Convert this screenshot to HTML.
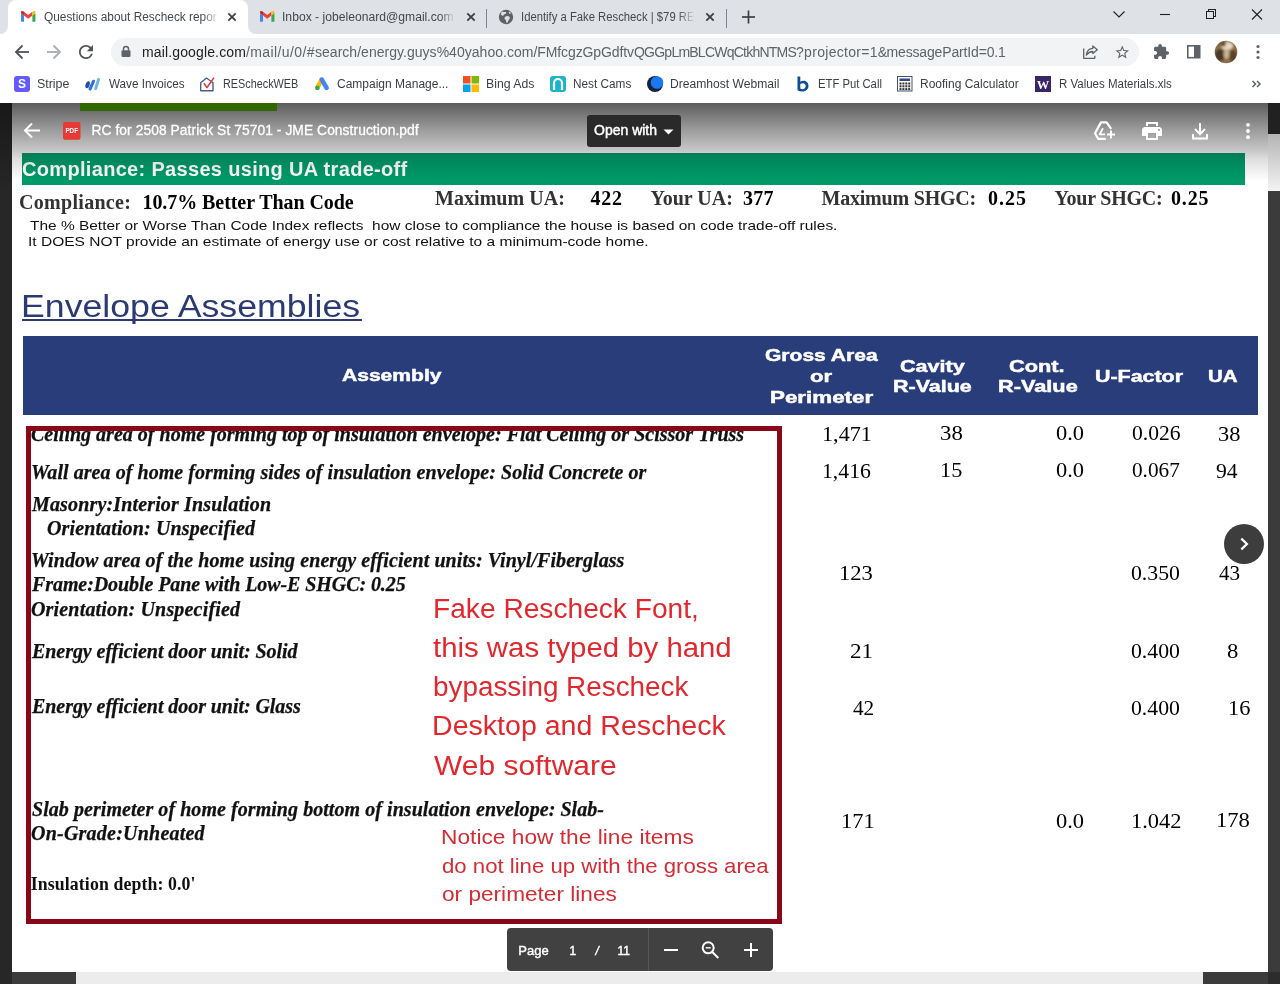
<!DOCTYPE html>
<html>
<head>
<meta charset="utf-8">
<title>Questions about Rescheck report</title>
<style>
*{box-sizing:border-box;margin:0;padding:0}
html,body{width:1280px;height:984px;overflow:hidden;background:#fff;font-family:"Liberation Sans",sans-serif;}
#root{will-change:transform;position:relative;width:1280px;height:984px;overflow:hidden;background:#fff}
.a{position:absolute}
.t{position:absolute;white-space:pre;line-height:1;transform-origin:0 0}
svg{position:absolute;overflow:visible}
</style>
</head>
<body>
<div id="root">

<!-- ===== PAGE SHAPES ===== -->
<div class="a" style="left:22px;top:153px;width:1223px;height:31.5px;background:#009a68"></div>
<div class="a" style="left:22px;top:319px;width:340px;height:2px;background:#2b3a73"></div>
<div class="a" style="left:22.5px;top:335.7px;width:1235px;height:79.8px;background:#293d7a"></div>

<div class="t" style="font-family:'Liberation Sans',sans-serif;font-size:12px;font-weight:400;top:11.02px;color:#45494d;transform:scaleX(0.9886);z-index:9;left:44.00px;">Questions about Rescheck repor</div>
<div class="t" style="font-family:'Liberation Sans',sans-serif;font-size:12px;font-weight:400;top:11.02px;color:#45494d;transform:scaleX(1.0119);z-index:9;left:281.99px;">Inbox - jobeleonard@gmail.com</div>
<div class="t" style="font-family:'Liberation Sans',sans-serif;font-size:12px;font-weight:400;top:11.02px;color:#45494d;transform:scaleX(0.9399);z-index:9;left:521.06px;">Identify a Fake Rescheck | $79 RE</div>
<div class="t" style="font-family:'Liberation Sans',sans-serif;font-size:14px;font-weight:400;letter-spacing:0.138px;top:45.02px;color:#202124;z-index:9;left:142.00px;">mail.google.com</div>
<div class="t" style="font-family:'Liberation Sans',sans-serif;font-size:14px;font-weight:400;letter-spacing:0.401px;top:45.02px;color:#5f6368;z-index:9;left:246.00px;">/mail/u/0/#</div>
<div class="t" style="font-family:'Liberation Sans',sans-serif;font-size:14px;font-weight:400;letter-spacing:0.028px;top:45.02px;color:#5f6368;z-index:9;left:315.00px;">search/energy.guys%40yahoo.com</div>
<div class="t" style="font-family:'Liberation Sans',sans-serif;font-size:14px;font-weight:400;letter-spacing:-0.102px;top:45.02px;color:#5f6368;z-index:9;left:533.50px;">/FMfcgzGpGdftv</div>
<div class="t" style="font-family:'Liberation Sans',sans-serif;font-size:14px;font-weight:400;letter-spacing:-0.768px;top:45.02px;color:#5f6368;z-index:9;left:634.00px;">QGGpLmBLCWqCtkhNTMS</div>
<div class="t" style="font-family:'Liberation Sans',sans-serif;font-size:14px;font-weight:400;letter-spacing:0.303px;top:45.02px;color:#5f6368;z-index:9;left:796.00px;">?projector=1&amp;</div>
<div class="t" style="font-family:'Liberation Sans',sans-serif;font-size:14px;font-weight:400;letter-spacing:-0.156px;top:45.02px;color:#5f6368;z-index:9;left:886.50px;">messagePartId=0.1</div>
<div class="t" style="font-family:'Liberation Sans',sans-serif;font-size:12px;font-weight:400;top:78.02px;color:#3c4043;transform:scaleX(1.0333);z-index:9;left:36.97px;">Stripe</div>
<div class="t" style="font-family:'Liberation Sans',sans-serif;font-size:12px;font-weight:400;top:78.02px;color:#3c4043;transform:scaleX(0.9740);z-index:9;left:109.00px;">Wave Invoices</div>
<div class="t" style="font-family:'Liberation Sans',sans-serif;font-size:12px;font-weight:400;top:78.02px;color:#3c4043;transform:scaleX(0.9024);z-index:9;left:223.10px;">REScheckWEB</div>
<div class="t" style="font-family:'Liberation Sans',sans-serif;font-size:12px;font-weight:400;top:78.02px;color:#3c4043;transform:scaleX(1.0000);z-index:9;left:337.00px;">Campaign Manage...</div>
<div class="t" style="font-family:'Liberation Sans',sans-serif;font-size:12px;font-weight:400;top:78.02px;color:#3c4043;transform:scaleX(1.0217);z-index:9;left:485.98px;">Bing Ads</div>
<div class="t" style="font-family:'Liberation Sans',sans-serif;font-size:12px;font-weight:400;top:78.02px;color:#3c4043;transform:scaleX(0.9828);z-index:9;left:573.02px;">Nest Cams</div>
<div class="t" style="font-family:'Liberation Sans',sans-serif;font-size:12px;font-weight:400;top:78.02px;color:#3c4043;transform:scaleX(1.0093);z-index:9;left:669.99px;">Dreamhost Webmail</div>
<div class="t" style="font-family:'Liberation Sans',sans-serif;font-size:12px;font-weight:400;top:78.02px;color:#3c4043;transform:scaleX(0.9394);z-index:9;left:818.06px;">ETF Put Call</div>
<div class="t" style="font-family:'Liberation Sans',sans-serif;font-size:12px;font-weight:400;top:78.02px;color:#3c4043;transform:scaleX(1.0000);z-index:9;left:920.00px;">Roofing Calculator</div>
<div class="t" style="font-family:'Liberation Sans',sans-serif;font-size:12px;font-weight:400;top:78.02px;color:#3c4043;transform:scaleX(0.9569);z-index:9;left:1059.04px;">R Values Materials.xls</div>
<div class="t" style="font-family:'Liberation Sans',sans-serif;font-size:13.8px;font-weight:400;letter-spacing:0.070px;top:124.02px;color:#fff;z-index:6;-webkit-text-stroke:0.3px #fff;left:91.50px;">RC for 2508 Patrick St 75701 - JME Construction.pdf</div>
<div class="t" style="font-family:'Liberation Sans',sans-serif;font-size:14px;font-weight:400;top:123.02px;color:#fff;z-index:7;-webkit-text-stroke:0.45px #fff;left:594.00px;">Open with</div>
<div class="t" style="font-family:'Liberation Sans',sans-serif;font-size:20px;font-weight:700;letter-spacing:0.319px;top:159.02px;color:#fff;left:22.00px;">Compliance: Passes using UA trade-off</div>
<div class="t" style="font-family:'Liberation Serif',serif;font-size:20px;font-weight:700;letter-spacing:0.300px;top:192.02px;color:#333;left:19.00px;">Compliance:</div>
<div class="t" style="font-family:'Liberation Serif',serif;font-size:20px;font-weight:700;letter-spacing:-0.071px;top:192.02px;color:#000;left:142.50px;">10.7% Better Than Code</div>
<div class="t" style="font-family:'Liberation Serif',serif;font-size:20px;font-weight:700;letter-spacing:0.050px;top:188.02px;color:#333;left:435.00px;">Maximum UA:</div>
<div class="t" style="font-family:'Liberation Serif',serif;font-size:20px;font-weight:700;letter-spacing:0.750px;top:188.02px;color:#000;left:590.50px;">422</div>
<div class="t" style="font-family:'Liberation Serif',serif;font-size:20px;font-weight:700;top:188.02px;color:#333;left:650.50px;">Your UA:</div>
<div class="t" style="font-family:'Liberation Serif',serif;font-size:20px;font-weight:700;letter-spacing:0.250px;top:188.02px;color:#000;left:743.00px;">377</div>
<div class="t" style="font-family:'Liberation Serif',serif;font-size:20px;font-weight:700;letter-spacing:-0.208px;top:188.02px;color:#333;left:821.50px;">Maximum SHGC:</div>
<div class="t" style="font-family:'Liberation Serif',serif;font-size:20px;font-weight:700;letter-spacing:1.000px;top:188.02px;color:#000;left:988.00px;">0.25</div>
<div class="t" style="font-family:'Liberation Serif',serif;font-size:20px;font-weight:700;letter-spacing:-0.222px;top:188.02px;color:#333;left:1054.50px;">Your SHGC:</div>
<div class="t" style="font-family:'Liberation Serif',serif;font-size:20px;font-weight:700;letter-spacing:0.833px;top:188.02px;color:#000;left:1171.00px;">0.25</div>
<div class="t" style="font-family:'Liberation Sans',sans-serif;font-size:13.3px;font-weight:400;top:219.02px;color:#111;transform:scaleX(1.1621);left:29.50px;">The % Better or Worse Than Code Index reflects  how close to compliance the house is based on code trade-off rules.</div>
<div class="t" style="font-family:'Liberation Sans',sans-serif;font-size:13.3px;font-weight:400;top:235.02px;color:#111;transform:scaleX(1.1670);left:28.33px;">It DOES NOT provide an estimate of energy use or cost relative to a minimum-code home.</div>
<div class="t" style="font-family:'Liberation Sans',sans-serif;font-size:31px;font-weight:400;top:291.02px;color:#2b3a73;transform:scaleX(1.1507);left:21.20px;">Envelope Assemblies</div>
<div class="t" style="font-family:'Liberation Sans',sans-serif;font-size:17px;font-weight:700;top:367.02px;color:#fff;transform:scaleX(1.2380);-webkit-text-stroke:0.5px #fff;left:342.46px;">Assembly</div>
<div class="t" style="font-family:'Liberation Sans',sans-serif;font-size:17px;font-weight:700;top:347.02px;color:#fff;transform:scaleX(1.2367);-webkit-text-stroke:0.5px #fff;left:764.76px;">Gross Area</div>
<div class="t" style="font-family:'Liberation Sans',sans-serif;font-size:17px;font-weight:700;top:368.02px;color:#fff;transform:scaleX(1.3000);-webkit-text-stroke:0.5px #fff;left:810.20px;">or</div>
<div class="t" style="font-family:'Liberation Sans',sans-serif;font-size:17px;font-weight:700;top:389.02px;color:#fff;transform:scaleX(1.3156);-webkit-text-stroke:0.5px #fff;left:770.08px;">Perimeter</div>
<div class="t" style="font-family:'Liberation Sans',sans-serif;font-size:17px;font-weight:700;top:358.02px;color:#fff;transform:scaleX(1.2660);-webkit-text-stroke:0.5px #fff;left:899.63px;">Cavity</div>
<div class="t" style="font-family:'Liberation Sans',sans-serif;font-size:17px;font-weight:700;top:378.02px;color:#fff;transform:scaleX(1.2623);-webkit-text-stroke:0.5px #fff;left:893.34px;">R-Value</div>
<div class="t" style="font-family:'Liberation Sans',sans-serif;font-size:17px;font-weight:700;top:358.02px;color:#fff;transform:scaleX(1.2810);-webkit-text-stroke:0.5px #fff;left:1009.12px;">Cont.</div>
<div class="t" style="font-family:'Liberation Sans',sans-serif;font-size:17px;font-weight:700;top:378.02px;color:#fff;transform:scaleX(1.2787);-webkit-text-stroke:0.5px #fff;left:998.22px;">R-Value</div>
<div class="t" style="font-family:'Liberation Sans',sans-serif;font-size:17px;font-weight:700;top:368.02px;color:#fff;transform:scaleX(1.2594);-webkit-text-stroke:0.5px #fff;left:1094.84px;">U-Factor</div>
<div class="t" style="font-family:'Liberation Sans',sans-serif;font-size:17px;font-weight:700;top:368.02px;color:#fff;transform:scaleX(1.2043);-webkit-text-stroke:0.5px #fff;left:1208.00px;">UA</div>
<div class="t" style="font-family:'Liberation Serif',serif;font-size:21px;font-weight:400;top:424.02px;color:#000;transform:scaleX(1.0568);left:822.29px;">1,471</div>
<div class="t" style="font-family:'Liberation Serif',serif;font-size:21px;font-weight:400;top:423.02px;color:#000;transform:scaleX(1.0842);left:939.52px;">38</div>
<div class="t" style="font-family:'Liberation Serif',serif;font-size:21px;font-weight:400;top:423.02px;color:#000;transform:scaleX(1.0680);left:1055.93px;">0.0</div>
<div class="t" style="font-family:'Liberation Serif',serif;font-size:21px;font-weight:400;top:423.02px;color:#000;transform:scaleX(1.0261);left:1131.67px;">0.026</div>
<div class="t" style="font-family:'Liberation Serif',serif;font-size:21px;font-weight:400;top:424.02px;color:#000;transform:scaleX(1.0684);left:1217.53px;">38</div>
<div class="t" style="font-family:'Liberation Serif',serif;font-size:21px;font-weight:400;top:461.02px;color:#000;transform:scaleX(1.0356);left:821.93px;">1,416</div>
<div class="t" style="font-family:'Liberation Serif',serif;font-size:21px;font-weight:400;top:460.02px;color:#000;transform:scaleX(1.0611);left:939.78px;">15</div>
<div class="t" style="font-family:'Liberation Serif',serif;font-size:21px;font-weight:400;top:460.02px;color:#000;transform:scaleX(1.0680);left:1055.93px;">0.0</div>
<div class="t" style="font-family:'Liberation Serif',serif;font-size:21px;font-weight:400;top:460.02px;color:#000;transform:scaleX(1.0109);left:1131.69px;">0.067</div>
<div class="t" style="font-family:'Liberation Serif',serif;font-size:21px;font-weight:400;top:461.02px;color:#000;transform:scaleX(1.0300);left:1215.87px;">94</div>
<div class="t" style="font-family:'Liberation Serif',serif;font-size:21px;font-weight:400;top:563.02px;color:#000;transform:scaleX(1.0759);left:839.35px;">123</div>
<div class="t" style="font-family:'Liberation Serif',serif;font-size:21px;font-weight:400;top:563.02px;color:#000;transform:scaleX(1.0348);left:1131.37px;">0.350</div>
<div class="t" style="font-family:'Liberation Serif',serif;font-size:21px;font-weight:400;top:563.02px;color:#000;transform:scaleX(1.0050);left:1218.70px;">43</div>
<div class="t" style="font-family:'Liberation Serif',serif;font-size:21px;font-weight:400;top:641.02px;color:#000;transform:scaleX(1.1000);left:849.60px;">21</div>
<div class="t" style="font-family:'Liberation Serif',serif;font-size:21px;font-weight:400;top:641.02px;color:#000;transform:scaleX(1.0348);left:1131.37px;">0.400</div>
<div class="t" style="font-family:'Liberation Serif',serif;font-size:21px;font-weight:400;top:641.02px;color:#000;transform:scaleX(1.0778);left:1226.92px;">8</div>
<div class="t" style="font-family:'Liberation Serif',serif;font-size:21px;font-weight:400;top:698.02px;color:#000;transform:scaleX(1.0100);left:853.20px;">42</div>
<div class="t" style="font-family:'Liberation Serif',serif;font-size:21px;font-weight:400;top:698.02px;color:#000;transform:scaleX(1.0348);left:1131.37px;">0.400</div>
<div class="t" style="font-family:'Liberation Serif',serif;font-size:21px;font-weight:400;top:698.02px;color:#000;transform:scaleX(1.0632);left:1227.57px;">16</div>
<div class="t" style="font-family:'Liberation Serif',serif;font-size:21px;font-weight:400;top:811.02px;color:#000;transform:scaleX(1.0714);left:840.86px;">171</div>
<div class="t" style="font-family:'Liberation Serif',serif;font-size:21px;font-weight:400;top:811.02px;color:#000;transform:scaleX(1.0680);left:1055.93px;">0.0</div>
<div class="t" style="font-family:'Liberation Serif',serif;font-size:21px;font-weight:400;top:811.02px;color:#000;transform:scaleX(1.0682);left:1130.86px;">1.042</div>
<div class="t" style="font-family:'Liberation Serif',serif;font-size:21px;font-weight:400;top:810.02px;color:#000;transform:scaleX(1.0759);left:1216.25px;">178</div>
<div class="t" style="font-family:'Liberation Serif',serif;font-size:20px;font-weight:700;font-style:italic;letter-spacing:0.012px;top:424.02px;color:#111;-webkit-text-stroke:0.25px #111;left:31.00px;">Ceiling area of home forming top of insulation envelope: Flat Ceiling or Scissor Truss</div>
<div class="t" style="font-family:'Liberation Serif',serif;font-size:20px;font-weight:700;font-style:italic;letter-spacing:0.056px;top:462.02px;color:#111;-webkit-text-stroke:0.25px #111;left:31.00px;">Wall area of home forming sides of insulation envelope: Solid Concrete or</div>
<div class="t" style="font-family:'Liberation Serif',serif;font-size:20px;font-weight:700;font-style:italic;letter-spacing:0.154px;top:494.02px;color:#111;-webkit-text-stroke:0.25px #111;left:32.00px;">Masonry:Interior Insulation</div>
<div class="t" style="font-family:'Liberation Serif',serif;font-size:20px;font-weight:700;font-style:italic;letter-spacing:0.130px;top:518.02px;color:#111;-webkit-text-stroke:0.25px #111;left:47.00px;">Orientation: Unspecified</div>
<div class="t" style="font-family:'Liberation Serif',serif;font-size:20px;font-weight:700;font-style:italic;letter-spacing:0.072px;top:550.02px;color:#111;-webkit-text-stroke:0.25px #111;left:31.00px;">Window area of the home using energy efficient units: Vinyl/Fiberglass</div>
<div class="t" style="font-family:'Liberation Serif',serif;font-size:20px;font-weight:700;font-style:italic;letter-spacing:-0.079px;top:574.02px;color:#111;-webkit-text-stroke:0.25px #111;left:32.00px;">Frame:Double Pane with Low-E SHGC: 0.25</div>
<div class="t" style="font-family:'Liberation Serif',serif;font-size:20px;font-weight:700;font-style:italic;letter-spacing:0.174px;top:599.02px;color:#111;-webkit-text-stroke:0.25px #111;left:31.00px;">Orientation: Unspecified</div>
<div class="t" style="font-family:'Liberation Serif',serif;font-size:20px;font-weight:700;font-style:italic;letter-spacing:-0.062px;top:641.02px;color:#111;-webkit-text-stroke:0.25px #111;left:32.00px;">Energy efficient door unit: Solid</div>
<div class="t" style="font-family:'Liberation Serif',serif;font-size:20px;font-weight:700;font-style:italic;letter-spacing:-0.062px;top:696.02px;color:#111;-webkit-text-stroke:0.25px #111;left:32.00px;">Energy efficient door unit: Glass</div>
<div class="t" style="font-family:'Liberation Serif',serif;font-size:20px;font-weight:700;font-style:italic;letter-spacing:0.055px;top:799.02px;color:#111;-webkit-text-stroke:0.25px #111;left:32.00px;">Slab perimeter of home forming bottom of insulation envelope: Slab-</div>
<div class="t" style="font-family:'Liberation Serif',serif;font-size:20px;font-weight:700;font-style:italic;letter-spacing:0.225px;top:823.02px;color:#111;-webkit-text-stroke:0.25px #111;left:31.00px;">On-Grade:Unheated</div>
<div class="t" style="font-family:'Liberation Serif',serif;font-size:17.8px;font-weight:700;letter-spacing:0.110px;top:876.02px;color:#111;left:30.70px;">Insulation depth: 0.0&#x27;</div>
<div class="t" style="font-family:'Liberation Sans',sans-serif;font-size:27px;font-weight:400;top:596.02px;color:#e0282e;transform:scaleX(1.0422);left:432.52px;">Fake Rescheck Font,</div>
<div class="t" style="font-family:'Liberation Sans',sans-serif;font-size:27px;font-weight:400;top:635.02px;color:#e0282e;transform:scaleX(1.0875);left:433.30px;">this was typed by hand</div>
<div class="t" style="font-family:'Liberation Sans',sans-serif;font-size:27px;font-weight:400;top:674.02px;color:#e0282e;transform:scaleX(1.0313);left:432.54px;">bypassing Rescheck</div>
<div class="t" style="font-family:'Liberation Sans',sans-serif;font-size:27px;font-weight:400;top:713.02px;color:#e0282e;transform:scaleX(1.0580);left:431.88px;">Desktop and Rescheck</div>
<div class="t" style="font-family:'Liberation Sans',sans-serif;font-size:27px;font-weight:400;top:753.02px;color:#e0282e;transform:scaleX(1.1098);left:434.00px;">Web software</div>
<div class="t" style="font-family:'Liberation Sans',sans-serif;font-size:21px;font-weight:400;top:826.02px;color:#d42c34;transform:scaleX(1.0827);left:440.93px;">Notice how the line items</div>
<div class="t" style="font-family:'Liberation Sans',sans-serif;font-size:21px;font-weight:400;top:855.02px;color:#d42c34;transform:scaleX(1.0553);left:442.04px;">do not line up with the gross area</div>
<div class="t" style="font-family:'Liberation Sans',sans-serif;font-size:21px;font-weight:400;top:883.02px;color:#d42c34;transform:scaleX(1.0776);left:442.02px;">or perimeter lines</div>
<div class="t" style="font-family:'Liberation Sans',sans-serif;font-size:13px;font-weight:400;top:944.02px;color:#fff;-webkit-text-stroke:0.4px #fff;z-index:2;left:518.30px;">Page</div>
<div class="t" style="font-family:'Liberation Sans',sans-serif;font-size:12px;font-weight:400;top:945.02px;color:#fff;-webkit-text-stroke:0.4px #fff;z-index:2;left:569.50px;">1</div>
<div class="t" style="font-family:'Liberation Sans',sans-serif;font-size:12px;font-weight:400;font-style:italic;top:945.02px;color:#fff;-webkit-text-stroke:0.4px #fff;z-index:2;left:595.50px;">/</div>
<div class="t" style="font-family:'Liberation Sans',sans-serif;font-size:12px;font-weight:400;top:945.02px;color:#fff;-webkit-text-stroke:0.4px #fff;z-index:2;left:617.50px;">11</div>

<!-- red box -->
<div class="a" style="left:26px;top:426px;width:756px;height:498px;border:5px solid #8a0718"></div>

<!-- circle next button -->
<div class="a" style="left:1224px;top:524px;width:40px;height:40px;border-radius:50%;background:#3d3d3d"></div>
<svg style="left:1224px;top:524px" width="40" height="40"><polyline points="17.300,14.600 22.900,20 17.300,25.400" fill="none" stroke="#fff" stroke-width="2.300"/></svg>

<!-- page control -->
<div class="a" style="left:507px;top:928px;width:266px;height:43px;border-radius:4px;background:#414141;z-index:1"></div>
<div class="a" style="left:648px;top:928px;width:1px;height:43px;background:#565656;z-index:1"></div>
<svg style="left:0;top:0;z-index:2" width="1280" height="984">
 <g stroke="#fff" stroke-width="2" fill="none">
  <line x1="664" y1="950" x2="678" y2="950"/>
  <circle cx="708.2" cy="947.8" r="5.5"/><line x1="712.3" y1="952" x2="718.3" y2="958"/><line x1="705.7" y1="947.8" x2="710.7" y2="947.8" stroke-width="1.4"/>
  <line x1="744" y1="950" x2="758" y2="950"/><line x1="751" y1="943" x2="751" y2="957"/>
 </g>
</svg>

<!-- ===== VIEWER HEADER GRADIENT ===== -->
<div class="a" style="left:12px;top:103px;width:1256px;height:78px;z-index:5;background:linear-gradient(to bottom,rgba(0,0,0,0.64) 0%,rgba(0,0,0,0.42) 30%,rgba(0,0,0,0.21) 62%,rgba(0,0,0,0.13) 72%,rgba(0,0,0,0) 100%)"></div>
<div class="a" style="left:80px;top:103px;width:197px;height:8.3px;background:#2f6800;z-index:6"></div>
<!-- open with -->
<div class="a" style="left:587px;top:115px;width:94px;height:32px;border-radius:3px;background:#2a2a2a;z-index:6"></div>
<svg style="left:0;top:0;z-index:6" width="1280" height="200">
 <polygon points="663.5,129.5 673.5,129.5 668.5,134.5" fill="#fff"/>
 <!-- back arrow -->
 <g stroke="#fff" stroke-width="2" fill="none"><line x1="25.5" y1="130.5" x2="40" y2="130.5"/><polyline points="32,123.5 25,130.5 32,137.5"/></g>
 <!-- pdf icon -->
 <rect x="63" y="122" width="17.5" height="17.7" rx="2" fill="#e53a35"/>
 <text x="71.7" y="133.4" font-family="Liberation Sans" font-weight="700" font-size="6.3" fill="#fff" text-anchor="middle">PDF</text>
 <!-- drive add -->
 <g stroke="#fff" stroke-width="2" fill="none" stroke-linejoin="round">
  <path d="M1105.800 138.800H1098.200L1095 133.200L1101 122.400H1106.600L1111.200 128.800" stroke-width="2.200"/>
  <path d="M1103 128.300L1099.700 134.300H1105" stroke-width="1.800"/>
  <line x1="1111" y1="130.500" x2="1111" y2="138.500" stroke-width="2"/><line x1="1107" y1="134.500" x2="1115" y2="134.500" stroke-width="2"/>
 </g>
 <!-- printer -->
 <path transform="translate(1140 119)" fill="#fff" d="M19 8H5c-1.66 0-3 1.34-3 3v6h4v4h12v-4h4v-6c0-1.66-1.34-3-3-3zm-3 11H8v-5h8v5zm3-7c-.55 0-1-.45-1-1s.45-1 1-1 1 .45 1 1-.45 1-1 1zm-1-9H6v4h12V3z"/>
 <rect x="1148" y="124" width="8" height="2.300" fill="#8c8c8c"/>
 <!-- download -->
 <g stroke="#fff" stroke-width="2" fill="none"><line x1="1200" y1="123" x2="1200" y2="134"/><polyline points="1195,129 1200,134.2 1205,129"/><polyline points="1193,134 1193,138.5 1207,138.5 1207,134"/></g>
 <!-- dots -->
 <g fill="#fff"><circle cx="1248" cy="124.800" r="1.900"/><circle cx="1248" cy="131" r="1.900"/><circle cx="1248" cy="137.200" r="1.900"/></g>
</svg>

<!-- ===== SIDE STRIPS / SCROLLBARS ===== -->
<div class="a" style="left:0;top:103px;width:12px;height:881px;background:linear-gradient(to bottom,#181818 0,#272727 90px,#272727 100%);z-index:7"></div>
<div class="a" style="left:1268px;top:103px;width:12px;height:881px;background:#3b3b3b;z-index:7"></div>
<div class="a" style="left:1268px;top:103px;width:12px;height:31px;background:#212121;z-index:7"></div>
<div class="a" style="left:1268px;top:134px;width:12px;height:56.5px;background:linear-gradient(to bottom,#b4b4b4,#f4f4f4);z-index:7"></div>
<div class="a" style="left:12px;top:972px;width:1256px;height:12px;background:#3b3b3b;z-index:7"></div>
<div class="a" style="left:76px;top:972px;width:1127px;height:12px;background:#ececec;z-index:7"></div>
<div class="a" style="left:1268px;top:972px;width:12px;height:12px;background:#2c2c2c;z-index:7"></div>

<!-- ===== BROWSER CHROME ===== -->
<div class="a" style="left:0;top:0;width:1280px;height:34px;background:#dee1e6;z-index:8"></div>
<div class="a" style="left:8px;top:0;width:240px;height:34px;background:#fff;border-radius:8px 8px 0 0;z-index:8"></div>
<div class="a" style="left:0;top:34px;width:1280px;height:69px;background:#fff;z-index:8"></div>
<div class="a" style="left:111px;top:38px;width:1028px;height:28px;border-radius:14px;background:#f1f3f4;z-index:8"></div>
<div class="a" style="left:486px;top:9px;width:1px;height:19px;background:#80868b;z-index:8"></div>
<div class="a" style="left:726px;top:9px;width:1px;height:19px;background:#80868b;z-index:8"></div>
<div class="a" style="left:203px;top:8px;width:17px;height:18px;background:linear-gradient(to right,rgba(255,255,255,0),#fff 95%);z-index:10"></div>
<div class="a" style="left:440px;top:8px;width:16px;height:18px;background:linear-gradient(to right,rgba(222,225,230,0),#dee1e6 95%);z-index:10"></div>
<div class="a" style="left:678px;top:8px;width:18px;height:18px;background:linear-gradient(to right,rgba(222,225,230,0),#dee1e6 95%);z-index:10"></div>
<svg style="left:0;top:0;z-index:8" width="260" height="34"><path d="M0 34A8 8 0 0 0 8 26V34zM256 34A8 8 0 0 1 248 26V34z" fill="#fff"/></svg>
<svg style="left:0;top:0;z-index:9" width="1280" height="103">
 <defs>
  <g id="gm">
   <path fill="#4285f4" d="M0 3v13.5A1.5 1.5 0 0 0 1.5 18H5V7.5z"/>
   <path fill="#34a853" d="M19 18h3.500a1.5 1.5 0 0 0 1.5-1.5V3l-5 4.5z"/>
   <path fill="#ea4335" d="M5 7.500V1.2l7 5.300 7-5.300v6.300l-7 5.300z"/>
   <path fill="#c5221f" d="M0 2.200V3l5 4.500V1.200L3.300.4A2 2 0 0 0 0 2.200z"/>
   <path fill="#fbbc04" d="M24 2.200V3l-5 4.500V1.200L20.700.4A2 2 0 0 1 24 2.200z"/>
  </g>
  <g id="cx" stroke="#3c4043" stroke-width="1.800" fill="none"><line x1="-3.700" y1="-3.700" x2="3.700" y2="3.700"/><line x1="3.700" y1="-3.700" x2="-3.700" y2="3.700"/></g>
 </defs>
 <!-- tab favicons -->
 <use href="#gm" transform="translate(21 11) scale(0.6)"/>
 <use href="#gm" transform="translate(260 11) scale(0.6)"/>
 <use href="#cx" transform="translate(232 17)"/>
 <use href="#cx" transform="translate(471 17)"/>
 <use href="#cx" transform="translate(710 17)"/>
 <!-- globe -->
 <circle cx="506" cy="17" r="7.2" fill="#5f6368"/>
 <path fill="#dee1e6" d="M502 11.800c1.200-.2 2.600.3 3.500.3.800 0 1 1 .2 1.600-.8.600-1.800.4-2 1.400-.2 1-1.500.8-2.200.2-.5-.5-.6-1.500-.4-2.200zM506.500 16.200c1.400-.3 3 .3 3.300 1.500.3 1.300-1 1.800-1.400 2.900-.3 1-.9 2.300-1.700 2.100-.8-.2-.4-1.600-.8-2.500-.4-.9-1.500-1-1.400-2.200.1-1 1-1.600 2-1.800zM509 11.500c.8.300 1.700 1 2.200 1.800l-1.300.5c-.7 0-1.200-.9-.9-2.300z"/>
 <!-- new tab plus -->
 <g stroke="#3c4043" stroke-width="1.700"><line x1="742" y1="17" x2="755" y2="17"/><line x1="748.500" y1="10.500" x2="748.500" y2="23.500"/></g>
 <!-- window controls -->
 <g stroke="#202124" stroke-width="1.100" fill="none">
  <polyline points="1113.500,11.500 1119,17 1124.500,11.500"/>
  <line x1="1160" y1="14.500" x2="1170" y2="14.500"/>
  <rect x="1206.500" y="11.500" width="7" height="7" shape-rendering="crispEdges"/><polyline points="1208.500,11.500 1208.500,9.500 1215.500,9.500 1215.500,16.500 1213.500,16.500" shape-rendering="crispEdges"/>
  <line x1="1252" y1="9.500" x2="1262" y2="19.500"/><line x1="1262" y1="9.500" x2="1252" y2="19.500"/>
 </g>
 <!-- nav buttons -->
 <g stroke="#505356" stroke-width="1.800" fill="none">
  <line x1="16.500" y1="52" x2="29" y2="52"/><polyline points="22.500,45.500 16,52 22.500,58.500"/>
 </g>
 <g stroke="#a9adb2" stroke-width="1.800" fill="none">
  <line x1="47" y1="52" x2="59.500" y2="52"/><polyline points="53.500,45.500 60,52 53.500,58.500"/>
 </g>
 <path transform="translate(75.500 41.500) scale(0.875)" fill="#505356" d="M17.650 6.350A7.958 7.958 0 0 0 12 4c-4.420 0-7.990 3.580-7.990 8s3.570 8 7.990 8c3.730 0 6.840-2.550 7.730-6h-2.080A5.990 5.990 0 0 1 12 18c-3.310 0-6-2.690-6-6s2.690-6 6-6c1.660 0 3.140.690 4.220 1.780L13 11h7V4l-2.350 2.350z"/>
 <!-- lock -->
 <rect x="121.5" y="50.300" width="9" height="6.700" rx="1.200" fill="#5f6368"/>
 <path d="M123.500 50.500v-1.400a2.500 2.500 0 0 1 5 0v1.400" stroke="#5f6368" stroke-width="1.500" fill="none"/>
 <!-- share -->
 <g stroke="#5f6368" stroke-width="1.300" fill="none" stroke-linejoin="round">
  <path d="M1083.700 48.500V58.300H1094.800V55.800"/>
  <path d="M1097.300 49.700L1092.800 46V48.300C1089 48.500 1086.800 51 1086.300 55.200C1088 52.700 1090 51.700 1092.800 51.500V53.500Z"/>
 </g>
 <!-- star -->
 <path transform="translate(1114.100 44.100) scale(0.68)" fill="#5f6368" d="M22 9.240l-7.190-.62L12 2 9.190 8.630 2 9.240l5.460 4.730L5.820 21 12 17.270 18.180 21l-1.630-7.030L22 9.240zM12 15.400l-3.760 2.270 1-4.280-3.320-2.880 4.380-.38L12 6.100l1.710 4.040 4.380.38-3.320 2.880 1 4.280L12 15.400z"/>
 <!-- puzzle -->
 <path transform="translate(1152.600 43.300) scale(0.714)" fill="#5f6368" d="M20.500 11H19V7c0-1.100-.9-2-2-2h-4V3.500C13 2.120 11.880 1 10.500 1S8 2.120 8 3.500V5H4c-1.100 0-1.990.9-1.990 2v3.800H3.500c1.490 0 2.700 1.210 2.700 2.700s-1.210 2.700-2.700 2.700H2V20c0 1.100.9 2 2 2h3.800v-1.500c0-1.490 1.210-2.700 2.700-2.700 1.490 0 2.700 1.210 2.700 2.700V22H17c1.100 0 2-.9 2-2v-4h1.500c1.380 0 2.500-1.120 2.500-2.500S21.880 11 20.500 11z"/>
 <!-- side panel -->
 <rect x="1187.800" y="45.800" width="11.900" height="11.900" fill="none" stroke="#5f6368" stroke-width="1.600"/><rect x="1194" y="45.800" width="5.700" height="11.900" fill="#5f6368"/>
 <!-- avatar -->
 <defs><radialGradient id="av" cx="0.45" cy="0.45" r="0.6"><stop offset="0" stop-color="#d9c39a"/><stop offset="0.5" stop-color="#a88a5c"/><stop offset="1" stop-color="#5a4630"/></radialGradient></defs>
 <filter id="avb" x="-20%" y="-20%" width="140%" height="140%"><feGaussianBlur stdDeviation="1.3"/></filter><clipPath id="avc"><circle cx="1226" cy="52" r="11.300"/></clipPath>
 <g clip-path="url(#avc)"><g filter="url(#avb)">
  <rect x="1210" y="36" width="32" height="32" fill="#8c6d48"/>
  <ellipse cx="1227" cy="46" rx="6" ry="4" fill="#e6dac2"/>
  <ellipse cx="1220" cy="55" rx="5" ry="6" fill="#4a3828"/>
  <ellipse cx="1233" cy="56" rx="4" ry="6" fill="#5a432c"/>
  <ellipse cx="1226.500" cy="54" rx="3" ry="5" fill="#c9b28a"/>
  <ellipse cx="1223" cy="44" rx="3" ry="2.500" fill="#6b5134"/>
 </g></g>
 <!-- menu dots -->
 <g fill="#5f6368"><circle cx="1258" cy="46.500" r="1.600"/><circle cx="1258" cy="52" r="1.600"/><circle cx="1258" cy="57.500" r="1.600"/></g>

 <!-- bookmark icons -->
 <rect x="14" y="76" width="16" height="16" rx="3" fill="#635bff"/>
 <text x="22" y="88.300" font-family="Liberation Sans" font-weight="700" font-size="12" fill="#fff" text-anchor="middle">S</text>
 <!-- wave -->
 <g fill="none" stroke-linecap="round"><ellipse cx="87.600" cy="84.700" rx="2" ry="3.600" transform="rotate(20 87.600 84.700)" fill="#1f4f96"/><line x1="90" y1="89" x2="93.600" y2="81.200" stroke="#2f6fdc" stroke-width="3"/><line x1="95.700" y1="88.600" x2="98.600" y2="79.400" stroke="#6fb6ea" stroke-width="3"/></g>
 <!-- rescheck -->
 <g fill="none" stroke-linejoin="round"><path d="M200.700 90.800V82.700L206.500 78L213 82.700V90.800Z" stroke="#46618a" stroke-width="1.400"/><path d="M203.900 83.300L207 87.600L214 77.600" stroke="#e23a3a" stroke-width="1.600"/></g>
 <!-- google ads -->
 <g fill="none" stroke-linecap="round"><line x1="321.600" y1="79.800" x2="317.600" y2="87" stroke="#fbbc04" stroke-width="4.600"/><line x1="321.800" y1="79.600" x2="326.600" y2="87.800" stroke="#4285f4" stroke-width="4.600"/><circle cx="317.400" cy="87.900" r="2.300" fill="#34a853"/></g>
 <!-- microsoft -->
 <rect x="463" y="76" width="7.500" height="7.500" fill="#f25022"/><rect x="471.500" y="76" width="7.500" height="7.500" fill="#7fba00"/><rect x="463" y="84.500" width="7.500" height="7.500" fill="#00a4ef"/><rect x="471.500" y="84.500" width="7.500" height="7.500" fill="#ffb900"/>
 <!-- nest -->
 <rect x="550" y="76" width="16" height="16" rx="3" fill="#1ab5c9"/><path d="M554 90v-7a4 4 0 0 1 8 0v7" stroke="#fff" stroke-width="2.200" fill="none"/>
 <!-- dreamhost -->
 <circle cx="655" cy="84" r="8" fill="#15223f"/><circle cx="657" cy="82.500" r="6.300" fill="#1a78f0"/>
 <!-- bing b -->
 <path d="M797.500 76.500h2.800v5.200c3.500-2.200 8.200-.3 8.200 4.200 0 5.200-6.500 6.900-11 4.300zM800.300 84v4.600c2.600 1.300 5.400.3 5.400-2.600 0-2.800-3-3.600-5.400-2z" fill="#0d4f94" fill-rule="evenodd"/>
 <!-- calc -->
 <rect x="897.500" y="76.500" width="14.500" height="14.500" fill="#fff" stroke="#44546a" stroke-width="1"/><rect x="899.500" y="78.500" width="10.500" height="2.500" fill="#2a4a8a"/>
 <g fill="#333"><rect x="899.500" y="82.500" width="2" height="2"/><rect x="902.400" y="82.500" width="2" height="2"/><rect x="905.300" y="82.500" width="2" height="2"/><rect x="908.200" y="82.500" width="2" height="2"/><rect x="899.500" y="85.300" width="2" height="2"/><rect x="902.400" y="85.300" width="2" height="2"/><rect x="905.300" y="85.300" width="2" height="2"/><rect x="908.200" y="85.300" width="2" height="2"/><rect x="899.500" y="88.100" width="2" height="2"/><rect x="902.400" y="88.100" width="2" height="2"/><rect x="905.300" y="88.100" width="2" height="2"/><rect x="908.200" y="88.100" width="2" height="2"/></g>
 <!-- W -->
 <rect x="1035" y="76" width="16" height="16" fill="#3a2568"/>
 <text x="1043" y="88.500" font-family="Liberation Serif" font-weight="700" font-size="12.500" fill="#fff" text-anchor="middle">W</text>
 <!-- overflow chevrons -->
 <g stroke="#5f6368" stroke-width="1.500" fill="none"><polyline points="1252.500,81 1255.500,84 1252.500,87"/><polyline points="1257,81 1260,84 1257,87"/></g>
</svg>

</div>
</body>
</html>
